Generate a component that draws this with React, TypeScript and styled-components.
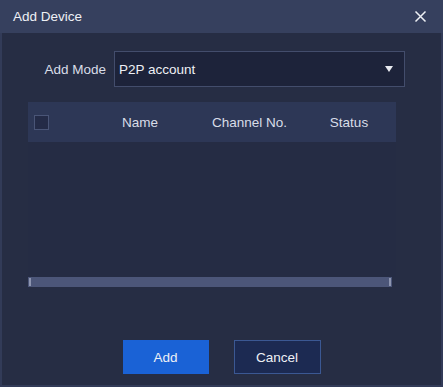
import React from 'react';
import styled, { createGlobalStyle } from 'styled-components';

const GlobalStyle = createGlobalStyle`
  html, body {
    margin: 0;
    padding: 0;
    background: #262d44;
  }
  * {
    box-sizing: border-box;
  }
`;

const Dialog = styled.div`
  width: 443px;
  height: 387px;
  display: flex;
  flex-direction: column;
  font-family: 'Liberation Sans', Arial, sans-serif;
  font-size: 13.5px;
  color: #d9dde8;
  background: #262d44;
`;

const TitleBar = styled.div`
  height: 33px;
  flex: none;
  display: flex;
  align-items: center;
  justify-content: space-between;
  padding: 0 16px 0 13px;
  background: #36405e;
  color: #eef0f5;
`;

const CloseButton = styled.span`
  display: flex;
  width: 13px;
  height: 13px;
  cursor: pointer;
`;

const Body = styled.div`
  flex: 1;
  display: flex;
  flex-direction: column;
  border: 2px solid #323b58;
  border-top: none;
  padding: 18px 0 0 26px;
`;

const FormRow = styled.div`
  display: flex;
  align-items: center;
  height: 36px;
`;

const FieldLabel = styled.label`
  width: 86px;
  padding-right: 8px;
  text-align: right;
  color: #d9dde8;
`;

const Select = styled.div`
  width: 291px;
  height: 36px;
  display: flex;
  align-items: center;
  justify-content: space-between;
  padding: 0 11px 0 4px;
  background: #1d233a;
  border: 1px solid #434d6c;
  color: #eef0f5;
`;

const Caret = styled.span`
  width: 0;
  height: 0;
  border-left: 4px solid transparent;
  border-right: 4px solid transparent;
  border-top: 6px solid #e8eaf0;
`;

const Table = styled.div`
  margin-top: 15px;
  width: 368px;
  display: flex;
  flex-direction: column;
`;

const HeaderRow = styled.div`
  height: 40px;
  display: grid;
  grid-template-columns: 56px 112px 107px 92px;
  align-items: center;
  background: #2d3756;
`;

const HeaderCell = styled.div`
  text-align: center;
  white-space: nowrap;
  color: #d9dde8;
`;

const Checkbox = styled.span`
  display: block;
  margin-left: 6px;
  width: 15px;
  height: 15px;
  background: #242b47;
  border: 1px solid #4a5577;
`;

const TableBody = styled.div`
  height: 135px;
  background: #252c44;
`;

const ScrollTrack = styled.div`
  width: 364px;
  height: 10px;
  display: flex;
  justify-content: space-between;
  align-items: center;
  padding: 0 1px;
  background: #4c5679;
`;

const ScrollEnd = styled.span`
  width: 2px;
  height: 8px;
  background: #a9b1c8;
  opacity: 0.7;
`;

const Actions = styled.div`
  margin-top: auto;
  margin-bottom: 11px;
  margin-left: -26px;
  display: flex;
  justify-content: center;
  gap: 25px;
`;

const Button = styled.button<{ primary?: boolean }>`
  width: ${(p) => (p.primary ? '86px' : '87px')};
  height: 34px;
  font-family: 'Liberation Sans', Arial, sans-serif;
  font-size: 13.5px;
  color: #eef0f5;
  cursor: pointer;
  background: ${(p) => (p.primary ? '#1a62d6' : '#1c2a52')};
  border: 1px solid ${(p) => (p.primary ? '#1a62d6' : '#3b5893')};
`;

export default function App() {
  return (
    <>
      <GlobalStyle />
      <Dialog>
        <TitleBar>
          <span>Add Device</span>
          <CloseButton>
            <svg width="13" height="13" viewBox="0 0 13 13">
              <path d="M1.5 1.5L11.5 11.5M11.5 1.5L1.5 11.5" stroke="#eef0f5" strokeWidth="1.5" />
            </svg>
          </CloseButton>
        </TitleBar>
        <Body>
          <FormRow>
            <FieldLabel>Add Mode</FieldLabel>
            <Select>
              <span>P2P account</span>
              <Caret />
            </Select>
          </FormRow>
          <Table>
            <HeaderRow>
              <Checkbox />
              <HeaderCell>Name</HeaderCell>
              <HeaderCell>Channel No.</HeaderCell>
              <HeaderCell>Status</HeaderCell>
            </HeaderRow>
            <TableBody />
            <ScrollTrack>
              <ScrollEnd />
              <ScrollEnd />
            </ScrollTrack>
          </Table>
          <Actions>
            <Button primary>Add</Button>
            <Button>Cancel</Button>
          </Actions>
        </Body>
      </Dialog>
    </>
  );
}
